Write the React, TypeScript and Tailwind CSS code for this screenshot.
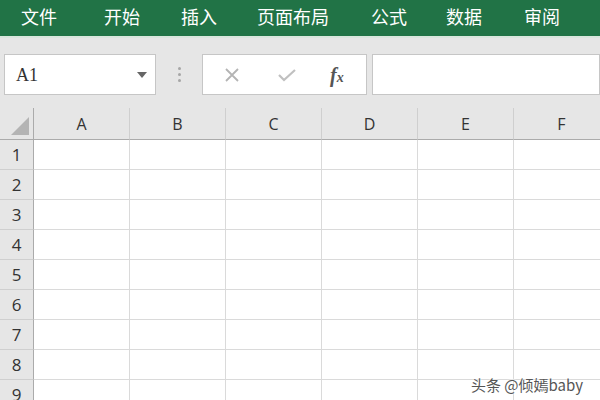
import React from 'react';

const tabs = [
  { label: '文件', ml: 'ml-[21px]' },
  { label: '开始', ml: 'ml-[47px]' },
  { label: '插入', ml: 'ml-[41px]' },
  { label: '页面布局', ml: 'ml-[40px]' },
  { label: '公式', ml: 'ml-[42px]' },
  { label: '数据', ml: 'ml-[39px]' },
  { label: '审阅', ml: 'ml-[42px]' },
];

const columns = ['A', 'B', 'C', 'D', 'E', 'F'];
const rows = [1, 2, 3, 4, 5, 6, 7, 8, 9];

export default function App() {
  return (
    <div className="relative w-[600px] h-[400px] overflow-hidden bg-[#e6e6e6] font-['Open_Sans',sans-serif]">
      {/* ribbon tabs */}
      <div className="h-[38px] bg-[#217346] border-b-2 border-[#d9e6dd] flex items-center">
        {tabs.map((t) => (
          <span
            key={t.label}
            className={`${t.ml} text-white text-[18px] leading-none font-['Noto_Sans_CJK_SC',sans-serif] -mt-[4px]`}
          >
            {t.label}
          </span>
        ))}
      </div>

      {/* formula bar */}
      <div className="h-[70px] flex items-start pt-[16px]">
        <div className="ml-[4px] w-[152px] h-[41px] bg-white border border-[#c6c6c6] flex items-center pl-[11px] pr-[8px]">
          <span className="flex-1 text-[18px] text-[#333] font-['Liberation_Serif',serif] mt-[2px]">A1</span>
          <svg width="10" height="6" viewBox="0 0 10 6">
            <path d="M0 0 L10 0 L5 6 Z" fill="#666" />
          </svg>
        </div>
        <div className="w-[46px] h-[41px] flex flex-col items-center justify-center gap-[3px]">
          <span className="w-[3px] h-[3px] rounded-full bg-[#a6a6a6]" />
          <span className="w-[3px] h-[3px] rounded-full bg-[#a6a6a6]" />
          <span className="w-[3px] h-[3px] rounded-full bg-[#a6a6a6]" />
        </div>
        <div className="w-[165px] h-[41px] bg-white border border-[#c6c6c6] flex items-center">
          <svg className="ml-[21px]" width="16" height="16" viewBox="0 0 16 16">
            <path d="M2 2 L14 14 M14 2 L2 14" stroke="#b4b4b4" strokeWidth="1.8" />
          </svg>
          <svg className="ml-[37px]" width="20" height="16" viewBox="0 0 20 16">
            <path d="M2 8 L7 13 L18 3" stroke="#c0c0c0" strokeWidth="2.2" fill="none" />
          </svg>
          <span className="ml-[33px] text-[20px] italic text-[#555] font-['Liberation_Serif',serif] font-semibold leading-none">
            f<span className="text-[14px]">x</span>
          </span>
        </div>
        <div className="ml-[5px] flex-1 h-[41px] bg-white border border-[#c6c6c6]" />
      </div>

      {/* sheet grid */}
      <div className="grid grid-cols-[34px_repeat(6,96px)] bg-white">
        <div className="h-[32px] bg-[#e6e6e6] border-r border-b border-[#ababab] flex items-end justify-end pr-[4px] pb-[4px]">
          <svg width="18" height="18" viewBox="0 0 18 18">
            <path d="M18 0 L18 18 L0 18 Z" fill="#b4b4b4" />
          </svg>
        </div>
        {columns.map((c) => (
          <div
            key={c}
            className="h-[32px] bg-[#e6e6e6] border-r border-b border-r-[#cfcfcf] border-b-[#ababab] flex items-center justify-center text-[16px] text-[#333]"
          >
            {c}
          </div>
        ))}
        {rows.map((r) => (
          <React.Fragment key={r}>
            <div className="h-[30px] bg-[#e6e6e6] border-r border-b border-r-[#ababab] border-b-[#cfcfcf] flex items-center justify-center text-[17px] text-[#333] pt-[1px]">
              {r}
            </div>
            {columns.map((c) => (
              <div key={c} className="h-[30px] border-r border-b border-[#dadada]" />
            ))}
          </React.Fragment>
        ))}
      </div>

      <span className="absolute left-[471px] top-[374px] text-[15px] text-[#555] font-['Noto_Sans_CJK_SC',sans-serif] [text-shadow:0_0_2px_#fff,0_0_2px_#fff]">
        头条 @倾嫣baby
      </span>
    </div>
  );
}
